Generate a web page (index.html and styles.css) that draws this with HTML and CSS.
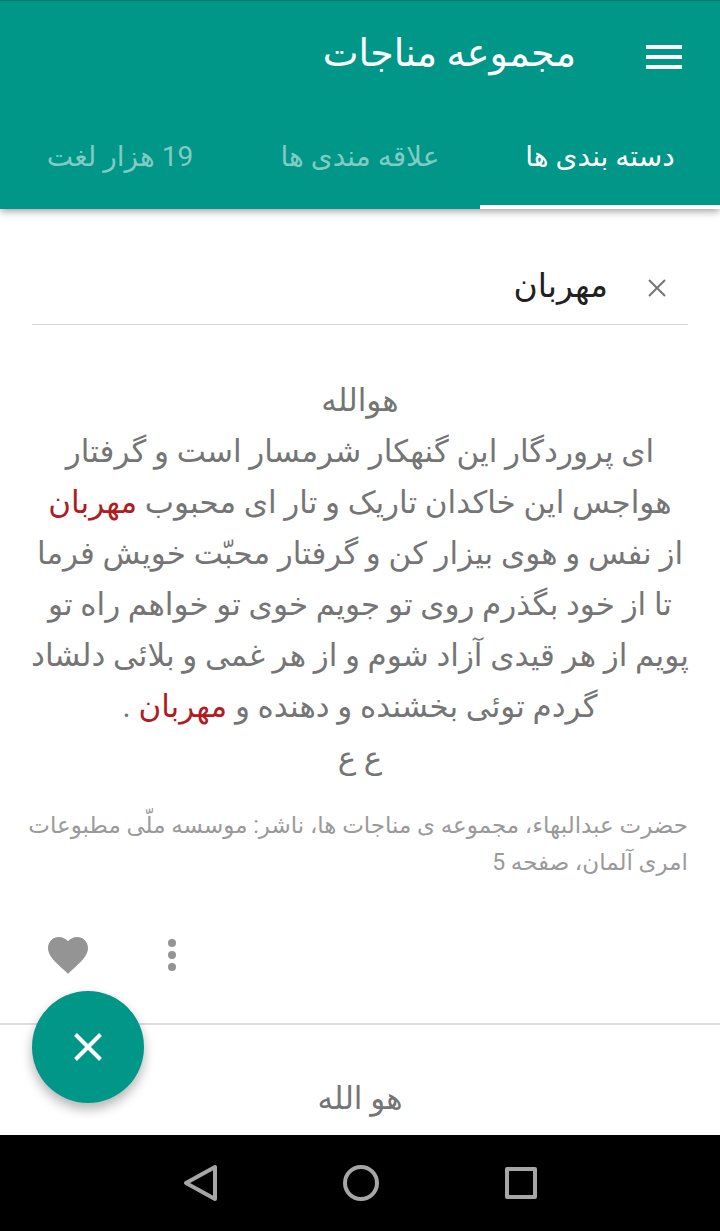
FILE: index.html
```html
<!DOCTYPE html>
<html lang="fa" dir="rtl">
<head>
    <meta charset="UTF-8">
    <meta name="viewport" content="width=device-width, initial-scale=1.0">
    <title>مجموعه مناجات</title>
    <link rel="stylesheet" href="styles.css">
</head>
<body>
    <header class="app-bar">
        <div class="toolbar">
            <button class="icon-btn" type="button" aria-label="منو">
                <svg width="36" height="24" viewBox="0 0 36 24" fill="#fff">
                    <rect y="0" width="36" height="4"/>
                    <rect y="10" width="36" height="4"/>
                    <rect y="20" width="36" height="4"/>
                </svg>
            </button>
            <h1>مجموعه مناجات</h1>
        </div>
        <nav class="tabs">
            <a class="tab active" href="#categories">دسته بندی ها</a>
            <a class="tab" href="#favorites">علاقه مندی ها</a>
            <a class="tab" href="#words">19 هزار لغت</a>
        </nav>
    </header>

    <main>
        <form class="search" onsubmit="return false;">
            <button class="clear-btn" type="reset" aria-label="پاک کردن">
                <svg width="18" height="18" viewBox="0 0 18 18" stroke="#757575" stroke-width="2">
                    <path d="M1 1L17 17M17 1L1 17"/>
                </svg>
            </button>
            <input type="text" class="search-input" aria-label="جستجو" value="مهربان">
        </form>

        <article class="prayer">
            <p class="prayer-text">
                هوالله<br>
                ای پروردگار این گنهکار شرمسار است و گرفتار<br>
                هواجس این خاکدان تاریک و تار ای محبوب <mark>مهربان</mark><br>
                از نفس و هوی بیزار کن و گرفتار محبّت خویش فرما<br>
                تا از خود بگذرم روی تو جویم خوی تو خواهم راه تو<br>
                پویم از هر قیدی آزاد شوم و از هر غمی و بلائی دلشاد<br>
                گردم توئی بخشنده و دهنده و <mark>مهربان</mark> .<br>
                ع ع
            </p>
            <p class="source">
                حضرت عبدالبهاء، مجموعه ی مناجات ها، ناشر: موسسه ملّی مطبوعات<br>
                امری آلمان، صفحه 5
            </p>
            <div class="actions">
                <button class="icon-btn" type="button" aria-label="گزینه ها">
                    <svg width="40" height="40" viewBox="0 0 40 40" fill="#949494">
                        <circle cx="20" cy="8" r="4"/>
                        <circle cx="20" cy="20" r="4"/>
                        <circle cx="20" cy="32" r="4"/>
                    </svg>
                </button>
                <button class="icon-btn" type="button" aria-label="علاقه مندی">
                    <svg width="40" height="40" viewBox="2 2 20 20" fill="#949494">
                        <path d="M12 21.35l-1.45-1.32C5.4 15.36 2 12.28 2 8.5 2 5.42 4.42 3 7.5 3c1.74 0 3.41.81 4.5 2.09C13.09 3.81 14.76 3 16.5 3 19.58 3 22 5.42 22 8.5c0 3.78-3.4 6.86-8.55 11.54L12 21.35z"/>
                    </svg>
                </button>
            </div>
        </article>

        <article class="prayer">
            <p class="prayer-text">هو الله</p>
        </article>
    </main>

    <button class="fab" type="button" aria-label="بستن">
        <svg width="28" height="28" viewBox="0 0 28 28" stroke="#fff" stroke-width="4">
            <path d="M1.5 1.5L26.5 26.5M26.5 1.5L1.5 26.5"/>
        </svg>
    </button>

    <footer class="nav-bar">
        <button class="icon-btn" type="button" aria-label="برگشت">
            <svg width="40" height="40" viewBox="0 0 40 40">
                <path d="M6 20L35 4V36Z"/>
            </svg>
        </button>
        <button class="icon-btn" type="button" aria-label="خانه">
            <svg width="40" height="40" viewBox="0 0 40 40">
                <circle cx="21" cy="20" r="16"/>
            </svg>
        </button>
        <button class="icon-btn" type="button" aria-label="برنامه های اخیر">
            <svg width="40" height="40" viewBox="0 0 40 40">
                <rect x="7" y="6" width="28" height="28"/>
            </svg>
        </button>
    </footer>
</body>
</html>
```
FILE: styles.css
```css
:root {
    --primary-color: #009688;
    --text-color: #757575;
    --light-text: #9a9a9a;
    --highlight: #b01c20;
}

* {
    box-sizing: border-box;
}

body {
    font-family: Roboto, "DejaVu Sans", sans-serif;
    margin: 0;
    height: 100vh;
    display: flex;
    flex-direction: column;
    background-color: white;
    color: var(--text-color);
    overflow: hidden;
}

button {
    border: none;
    padding: 0;
    background: none;
    cursor: pointer;
}

svg {
    display: block;
}

.app-bar {
    position: relative;
    flex: none;
    background-color: var(--primary-color);
    border-top: 1px solid #00796b;
    color: white;
    box-shadow: 0 2px 8px rgba(0,0,0,0.4);
}

.toolbar {
    display: flex;
    align-items: center;
    gap: 70px;
    height: 112px;
    padding: 0 38px;
}

.toolbar h1 {
    margin: 0;
    padding-bottom: 8px;
    font-size: 38px;
    font-weight: normal;
}

.tabs {
    display: grid;
    grid-template-columns: repeat(3, 1fr);
}

.tab {
    height: 96px;
    line-height: 88px;
    border-bottom: 4px solid transparent;
    color: #80cbc4;
    font-size: 28px;
    text-align: center;
    text-decoration: none;
    white-space: nowrap;
}

.tab.active {
    color: white;
    border-bottom-color: white;
}

main {
    flex: 1;
    min-height: 0;
    overflow: hidden;
}

.search {
    display: flex;
    align-items: center;
    gap: 40px;
    height: 76px;
    margin: 40px 32px 50px;
    padding: 2px 22px 0 0;
    border-bottom: 1px solid #d6d6d6;
}

.search-input {
    flex: 1;
    min-width: 0;
    padding: 0 0 4px;
    border: none;
    outline: none;
    background: none;
    color: #212121;
    font-family: inherit;
    font-size: 33px;
}

.prayer {
    border-bottom: 2px solid #dedede;
}

.prayer:last-child {
    border-bottom: none;
}

.prayer-text {
    margin: 0;
    font-size: 31px;
    line-height: 51px;
    text-align: center;
    white-space: nowrap;
}

mark {
    background: none;
    color: var(--highlight);
}

.source {
    margin: 24px 32px 0;
    color: var(--light-text);
    font-size: 23px;
    line-height: 37px;
    white-space: nowrap;
}

.actions {
    display: flex;
    justify-content: flex-end;
    gap: 64px;
    padding: 54px 48px 48px;
}

.prayer + .prayer {
    padding-top: 48px;
}

.fab {
    position: absolute;
    left: 32px;
    bottom: 128px;
    display: flex;
    justify-content: center;
    align-items: center;
    width: 112px;
    height: 112px;
    border-radius: 50%;
    background-color: var(--primary-color);
    box-shadow: 0 6px 12px rgba(0,0,0,0.3);
}

.nav-bar {
    flex: none;
    display: flex;
    direction: ltr;
    justify-content: center;
    align-items: center;
    gap: 120px;
    height: 96px;
    background-color: black;
}

.nav-bar svg {
    fill: none;
    stroke: #a6a6a6;
    stroke-width: 4;
    stroke-linejoin: round;
}
```
